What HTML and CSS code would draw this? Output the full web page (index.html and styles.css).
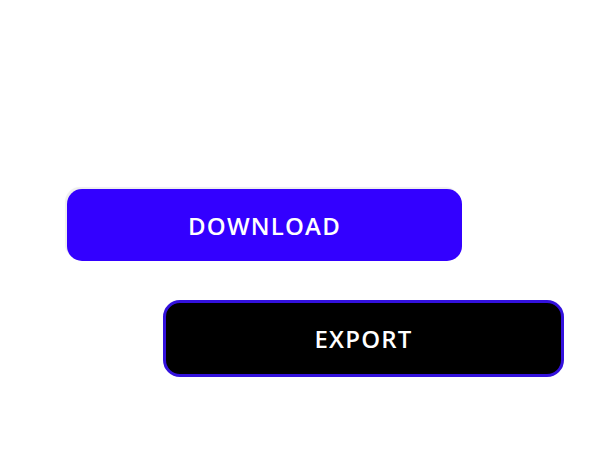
FILE: index.html
```html
<!DOCTYPE html>
<html>
<head>
<meta charset="utf-8">
<link rel="stylesheet" href="styles.css">
</head>
<body>
<div class="stage">
  <button class="btn btn-download">DOWNLOAD</button>
  <button class="btn btn-export">EXPORT</button>
</div>
</body>
</html>
```
FILE: styles.css
```css
* { box-sizing: border-box; }
html, body { margin: 0; padding: 0; background: #fff; }
.stage {
  width: 600px;
  height: 450px;
  display: flex;
  flex-direction: column;
  align-items: flex-start;
  padding-top: 189px;
}
.btn {
  font-family: "Open Sans", sans-serif;
  font-weight: 600;
  font-size: 24px;
  letter-spacing: 1.2px;
  color: #fff;
  display: flex;
  align-items: center;
  justify-content: center;
  padding: 0;
  cursor: pointer;
}
.btn-download {
  margin-left: 67px;
  width: 395px;
  height: 72px;
  background: #3300ff;
  border: none;
  border-radius: 15px;
  box-shadow: -2px -2px 1px #eeeeee;
}
.btn-export {
  margin-left: 163px;
  margin-top: 39px;
  width: 401px;
  height: 77px;
  background: #000;
  border: 3px solid #3311dd;
  border-radius: 17px;
}
```
